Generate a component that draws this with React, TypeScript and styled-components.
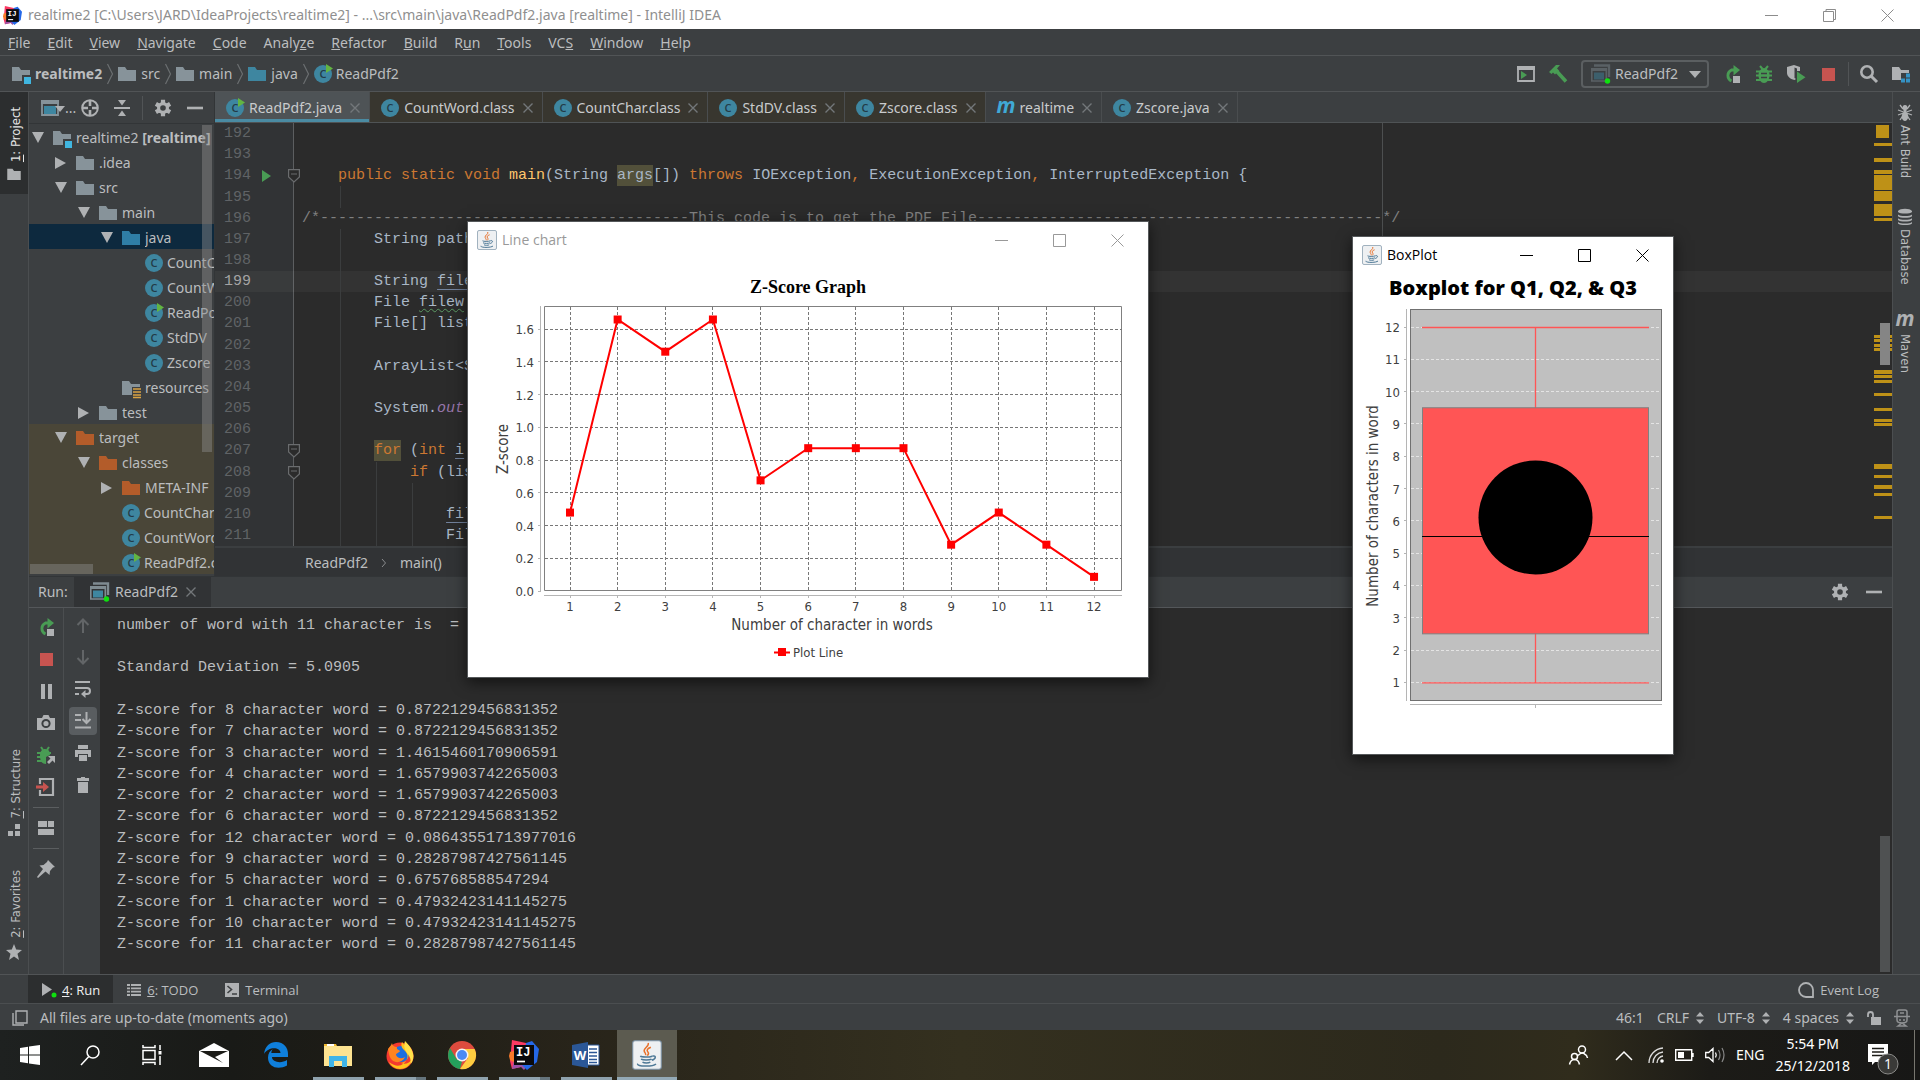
import React from "react";
import styled, { createGlobalStyle, css } from "styled-components";

const ui = `"Noto Sans", "Open Sans", sans-serif`;
const uiNarrow = `"Open Sans", "Noto Sans", sans-serif`;
const tahoma = `"DejaVu Sans Condensed", "DejaVu Sans", sans-serif`;
const mono = `"Liberation Mono", monospace`;

const c = {
  panel: "#3c3f41",
  editor: "#2b2b2b",
  gutter: "#313335",
  dark: "#2c2e2f",
  line: "#515456",
  text: "#bbbdbf",
  icon: "#afb1b3",
  green: "#499c54",
  red: "#c75450",
  teal: "#3e86a0",
  warn: "#be9117",
};

const GlobalStyle = createGlobalStyle`
  * { box-sizing: border-box; }
  body { margin: 0; background: ${c.panel}; overflow: hidden; }
  button, select { font: inherit; color: inherit; background: none; border: 0; padding: 0; margin: 0; }
  h2, p { margin: 0; font-weight: inherit; }
`;

const Desktop = styled.div`
  position: relative;
  display: flex;
  flex-direction: column;
  height: 100vh;
  background: ${c.panel};
  color: ${c.text};
  font: 14px/20px ${ui};
`;

/* ---------- icons ---------- */

const Glyph = styled.svg`
  display: block;
  flex: none;
  overflow: visible;
`;

type IconProps = { w?: number; h?: number; box?: string; children?: React.ReactNode };
const Icon = ({ w = 18, h = 18, box, children }: IconProps) => (
  <Glyph width={w} height={h} viewBox={box ?? `0 0 ${w} ${h}`} fill="none" aria-hidden="true">
    {children}
  </Glyph>
);

const Folder = ({ color = "#87939a", mark }: { color?: string; mark?: "module" | "res" }) => (
  <Icon w={19}>
    <path d="M0 2h7l2 3h9v11H0z" fill={color} />
    {mark === "module" && <path d="M10 10h9v9h-9z" fill={c.panel} />}
    {mark === "module" && <path d="M12 12h7v7h-7z" fill="#40b6e0" />}
    {mark === "res" && <path d="M10 8h9v10h-9z" fill={c.panel} />}
    {mark === "res" && <path d="M11 10h8M11 13h8M11 16h8M11 18.500h8" stroke="#d9a343" strokeWidth="1.500" />}
  </Icon>
);

const ClassIcon = ({ run }: { run?: boolean }) => (
  <Icon>
    <circle cx="9" cy="9" r="9" fill={c.teal} />
    <text x="9" y="13" textAnchor="middle" fontFamily="Open Sans" fontSize="11" fontWeight="600" fill="#233b47">C</text>
    {run && <path d="M12-1l7 4.500-7 4.500z" fill="#62b543" />}
  </Icon>
);

const MavenIcon = ({ color = "#40a9d6" }: { color?: string }) => (
  <Icon w={18}>
    <text x="9" y="14" textAnchor="middle" fontFamily="Open Sans" fontSize="21" fontStyle="italic" fontWeight="700" fill={color}>m</text>
  </Icon>
);

const IdeaIcon = ({ size }: { size: number }) => (
  <Icon w={size} h={size} box="0 0 30 30">
    <path d="M3 0l14 3 3 6-8 18-9 2-2-8z" fill="#fb3a63" />
    <path d="M1 12l7-2v14l-7-4-1-4z" fill="#f97a2b" />
    <path d="M3 29l2-8 14 4-4 5-3-3z" fill="#9a52a8" />
    <path d="M17 3l6-2 7 8-2 13-10 8-5-5z" fill="#2468e8" />
    <path d="M5 5h20v20H5z" fill="#0a0a0c" />
    <text x="7" y="16" fontFamily="Liberation Mono" fontWeight="700" fontSize="12" fill="#fff">IJ</text>
    <path d="M8 21.500h8" stroke="#fff" strokeWidth="1.700" />
  </Icon>
);

const JavaIcon = ({ w = 20, h = 20 }: { w?: number; h?: number }) => (
  <Icon w={w} h={h} box="0 0 20 20">
    <rect x=".5" y=".5" width="19" height="19" rx="1.500" fill="#eef0f2" stroke="#7d93a6" strokeWidth=".7" />
    <path d="M10.800 2c1 2.200-3.600 3.400-2.600 5.600.4 1 1.200 1.500.9 2.600M12.600 4.800c-2.200.8-3.200 1.900-2 3.200.7.800.5 1.600-.4 2.400" stroke="#e8722c" strokeWidth="1" />
    <path d="M5.500 10.800c1 .8 6 .8 8 0M6 12.800c1.500.8 5.500.8 7 0M7 14.800c1.200.7 4 .7 5.200 0M13.600 10.700c2.800-.6 2.400 2-.4 2.800M3.800 15.800c-1 2 10 2.200 12.200.2" stroke="#4d7896" strokeWidth="1" />
  </Icon>
);

const Gear = () => (
  <Icon>
    <path d="M9 .8v16.400M1.900 4.900l14.200 8.200M1.900 13.100l14.200-8.200" stroke={c.icon} strokeWidth="4.200" />
    <circle cx="9" cy="9" r="6" fill={c.icon} />
    <circle cx="9" cy="9" r="2.800" fill={c.panel} />
  </Icon>
);

const Minus = () => <Icon w={16}><path d="M0 9h16" stroke={c.icon} strokeWidth="2.600" /></Icon>;
const CloseMark = () => <Icon w={10} h={10}><path d="M.5.5l9 9M9.500.5l-9 9" stroke="#73777a" strokeWidth="1.400" /></Icon>;

const Rerun = () => (
  <Icon>
    <path d="M12 5H8.500a6 6 0 0 0 0 11" stroke={c.green} strokeWidth="2.800" />
    <path d="M10.500 0L17 5l-6.500 5.500z" fill={c.green} />
    <path d="M10 11h7v7h-7z" fill={c.icon} />
  </Icon>
);
const Stop = () => <Icon w={13} h={13}><path d="M0 0h13v13H0z" fill={c.red} /></Icon>;
const Bug = () => (
  <Icon>
    <path d="M5 1l2.500 3M13 1l-2.500 3M1 6.500h16M1 10.500h16M1 15h16" stroke={c.green} strokeWidth="2" />
    <ellipse cx="9" cy="10.500" rx="5.500" ry="7.500" fill={c.green} />
    <path d="M6 8.500h6M6 12.500h6" stroke={c.panel} strokeWidth="1.500" />
  </Icon>
);
const RunConfig = ({ dim }: { dim?: boolean }) => (
  <Icon w={20} h={20}>
    <g opacity={dim ? 0.45 : 1}>
      <path d="M3 1.500h15V13" stroke="#7f8b91" strokeWidth="2.400" />
      <path d="M.8 5h14.500v12H.8z" stroke="#7f8b91" strokeWidth="1.600" />
      <path d="M0 4h16v3H0z" fill="#7f8b91" />
      <path d="M3 8.500h10v7H3z" fill={c.teal} />
    </g>
    <circle cx="16.500" cy="17" r="2.700" fill="#0fe00f" />
  </Icon>
);

/* ---------- window chrome ---------- */

const TitleBar = styled.header`
  display: flex;
  align-items: center;
  flex: 0 0 29px;
  gap: 6px;
  padding: 1px 4px 0 3px;
  background: #fff;
  color: #8f8f8f;
`;
const Grow = styled.span`flex: 1;`;
const ControlGroup = styled.div`display: flex;`;
const WinButton = styled.button`
  display: flex;
  justify-content: center;
  align-items: center;
  width: 58px;
  height: 28px;
`;
const WinControls = ({ color, restore }: { color: string; restore?: boolean }) => (
  <ControlGroup>
    <WinButton aria-label="Minimize"><Icon w={13} h={13}><path d="M0 6.500h13" stroke={color} /></Icon></WinButton>
    <WinButton aria-label="Maximize">
      <Icon w={13} h={13}>
        {restore ? <path d="M.5 2.500h10v10H.5zM3 2.500v-2h9.500v10H11" stroke={color} /> : <path d="M.5.5h12v12H.5z" stroke={color} />}
      </Icon>
    </WinButton>
    <WinButton aria-label="Close"><Icon w={13} h={13}><path d="M.5.5l12 12M12.500.5l-12 12" stroke={color} /></Icon></WinButton>
  </ControlGroup>
);

const MenuBar = styled.nav`
  display: flex;
  align-items: center;
  flex: 0 0 27px;
  gap: 17px;
  padding: 2px 8px 0;
  border-bottom: 1px solid ${c.line};
`;
const menus: [string, string, string][] = [
  ["", "F", "ile"], ["", "E", "dit"], ["", "V", "iew"], ["", "N", "avigate"], ["", "C", "ode"], ["Analy", "z", "e"],
  ["", "R", "efactor"], ["", "B", "uild"], ["R", "u", "n"], ["", "T", "ools"], ["VC", "S", ""], ["", "W", "indow"], ["", "H", "elp"],
];

const NavBar = styled.div`
  display: flex;
  align-items: center;
  justify-content: space-between;
  flex: 0 0 36px;
  padding: 1px 10px 0 12px;
  border-bottom: 1px solid ${c.line};
`;
const Crumbs = styled.div`
  display: flex;
  align-items: center;
  gap: 5px;
`;
const Crumb = styled.button<{ $bold?: boolean }>`
  display: flex;
  align-items: center;
  gap: 4px;
  font-weight: ${(p) => (p.$bold ? 700 : 400)};
`;
const Chevron = () => <Icon w={6} h={20}><path d="M.5 0l5 10-5 10" stroke="#6b6e70" strokeWidth="1.200" /></Icon>;
const Tools = styled.div`
  display: flex;
  align-items: center;
  gap: 14px;
`;
const ToolButton = styled.button`
  display: flex;
  align-items: center;
  justify-content: center;
  min-width: 18px;
`;
const Divider = styled.span<{ $tight?: boolean }>`
  width: 1px;
  height: 24px;
  margin: 0 ${(p) => (p.$tight ? -3 : 0)}px;
  background: ${c.line};
`;
const RunPicker = styled.label`
  display: flex;
  align-items: center;
  gap: 4px;
  width: 128px;
  height: 28px;
  padding: 0 6px 0 8px;
  border: 2px solid #5b5f61;
  border-radius: 4px;
  select { appearance: none; flex: 1; min-width: 0; outline: none; }
`;

/* ---------- workspace ---------- */

const Workspace = styled.main`
  display: flex;
  flex: 1;
  min-height: 0;
`;
const Stripe = styled.aside<{ $side: "left" | "right" }>`
  display: flex;
  flex-direction: column;
  flex: 0 0 ${(p) => (p.$side === "left" ? 29 : 28)}px;
  ${(p) => (p.$side === "left" ? "border-right" : "border-left")}: 1px solid #4b4e50;
  font: 13px/16px ${tahoma};
`;
const StripeButton = styled.button<{ $active?: boolean; $left?: boolean; $end?: number }>`
  display: flex;
  flex-direction: column;
  align-items: center;
  gap: ${(p) => (p.$left ? 6 : 4)}px;
  padding: ${(p) => (p.$left ? "15px 0" : "13px 3px")} ${(p) => p.$end ?? 12}px 0;
  ${(p) => p.$active && css`background: ${c.dark}; color: #e6e6e6;`}
  span {
    writing-mode: vertical-rl;
    ${(p) => (p.$left ? "transform: rotate(180deg); margin-left: 4px;" : "margin-right: 2px;")}
  }
`;
const Center = styled.div`
  display: flex;
  flex-direction: column;
  flex: 1;
  min-width: 0;
`;
const Upper = styled.div`
  display: flex;
  flex: 1;
  min-height: 0;
`;

const Project = styled.section`
  position: relative;
  display: flex;
  flex-direction: column;
  flex: 0 0 186px;
  border-right: 1px solid #323537;
  overflow: hidden;
`;
const ProjectHead = styled.div`
  display: flex;
  align-items: center;
  gap: 14px;
  flex: 0 0 32px;
  padding-left: 12px;
  border-bottom: 1px solid #323537;
`;
const ViewPicker = styled.button`
  display: flex;
  align-items: center;
  width: 26px;
`;
const Row = styled.button<{ $level: number; $selected?: boolean; $excluded?: boolean }>`
  display: flex;
  align-items: center;
  gap: 4px;
  flex: 0 0 25px;
  width: 100%;
  padding: 2px 0 0 ${(p) => 2 + p.$level * 23}px;
  background: ${(p) => (p.$selected ? "#0d293e" : p.$excluded ? "#4a4638" : "transparent")};
`;
const RowLabel = styled.span`
  flex: 1;
  min-width: 0;
  overflow: hidden;
  text-align: left;
  white-space: nowrap;
`;
const Arrow = styled.span`
  display: flex;
  justify-content: center;
  flex: 0 0 13px;
  margin-right: 5px;
`;
const Thumb = styled.i<{ $w: number; $h: number; $at: string; $color?: string }>`
  position: absolute;
  width: ${(p) => p.$w}px;
  height: ${(p) => p.$h}px;
  ${(p) => p.$at};
  background: ${(p) => p.$color ?? "rgba(140, 140, 140, 0.45)"};
`;

type Node = { label: React.ReactNode; level: number; open?: boolean; closed?: boolean; icon: React.ReactNode; selected?: boolean; excluded?: boolean };
const orange = "#b35c2a";
const tree: Node[] = [
  { label: <>realtime2 <b>[realtime]</b></>, level: 0, open: true, icon: <Folder mark="module" /> },
  { label: ".idea", level: 1, closed: true, icon: <Folder /> },
  { label: "src", level: 1, open: true, icon: <Folder /> },
  { label: "main", level: 2, open: true, icon: <Folder /> },
  { label: "java", level: 3, open: true, icon: <Folder color="#2f7ea6" />, selected: true },
  { label: "CountChar", level: 4, icon: <ClassIcon /> },
  { label: "CountWord", level: 4, icon: <ClassIcon /> },
  { label: "ReadPdf2", level: 4, icon: <ClassIcon run /> },
  { label: "StdDV", level: 4, icon: <ClassIcon /> },
  { label: "Zscore", level: 4, icon: <ClassIcon /> },
  { label: "resources", level: 3, icon: <Folder mark="res" /> },
  { label: "test", level: 2, closed: true, icon: <Folder /> },
  { label: "target", level: 1, open: true, icon: <Folder color={orange} />, excluded: true },
  { label: "classes", level: 2, open: true, icon: <Folder color={orange} />, excluded: true },
  { label: "META-INF", level: 3, closed: true, icon: <Folder color={orange} />, excluded: true },
  { label: "CountChar", level: 3, icon: <ClassIcon />, excluded: true },
  { label: "CountWord", level: 3, icon: <ClassIcon />, excluded: true },
  { label: "ReadPdf2.class", level: 3, icon: <ClassIcon run />, excluded: true },
];

/* ---------- editor ---------- */

const Editor = styled.section`
  display: flex;
  flex-direction: column;
  flex: 1;
  min-width: 0;
`;
const Tabs = styled.div`
  display: flex;
  flex: 0 0 31px;
  border-bottom: 1px solid #4f5355;
`;
const Tab = styled.div<{ $kind: "active" | "lib" | "plain" }>`
  display: flex;
  align-items: center;
  gap: 5px;
  padding: 2px 9px 0 11px;
  color: #c9cbcd;
  border-right: 1px solid #4a4d4f;
  background: ${(p) => (p.$kind === "active" ? "#4e5356" : p.$kind === "lib" ? "#38362f" : c.panel)};
  ${(p) => p.$kind === "active" && "box-shadow: inset 0 -3px #4a8ba3;"}
`;
const TabClose = styled.button`margin-left: 3px;`;

const CodePane = styled.div`
  position: relative;
  display: flex;
  flex-direction: column;
  flex: 1;
  min-height: 0;
  overflow: hidden;
  background: linear-gradient(90deg, ${c.gutter} 78px, #5c5e60 78px, #5c5e60 79px, ${c.editor} 79px);
  font: 15px/20px ${mono};
  color: #a9b7c6;
`;
const CodeRow = styled.div<{ $current?: boolean }>`
  display: flex;
  align-items: center;
  flex: 1;
  min-height: 0;
  white-space: pre;
  ${(p) => p.$current && "background: rgba(255, 255, 255, 0.04);"}
`;
const Gutter = styled.div<{ $current?: boolean }>`
  position: relative;
  display: flex;
  align-items: center;
  align-self: stretch;
  gap: 11px;
  flex: 0 0 79px;
  padding: 1px 0 0 9px;
  color: ${(p) => (p.$current ? "#a4a3a3" : "#606366")};
`;
const Fold = styled.span`
  position: absolute;
  right: -6px;
  top: 4px;
`;
const Code = styled.div`
  position: relative;
  display: flex;
  align-items: center;
  align-self: stretch;
  flex: 1;
  padding: 1px 0 0 8px;
`;
const Guide = styled.i<{ $col: number }>`
  position: absolute;
  top: 0;
  bottom: 0;
  left: ${(p) => 10 + p.$col * 9}px;
  width: 1px;
  background: #3b3d3e;
`;
const K = styled.span`color: #cc7832;`;
const Fn = styled.span`color: #ffc66d;`;
const Field = styled.span`color: #9876aa; font-style: italic;`;
const Comment = styled.span`color: #808080;`;
const Hit = styled.span`background: #52503a; padding: 2px 0;`;
const Var = styled.span<{ $wavy?: boolean }>`
  text-decoration: underline ${(p) => (p.$wavy ? "wavy #5b9a63" : "#72829c")} 1px;
  text-underline-offset: ${(p) => (p.$wavy ? 2 : 4)}px;
`;
const Margin = styled.i`
  position: absolute;
  top: 0;
  bottom: 0;
  left: 1167px;
  width: 1px;
  background: #4d4f50;
`;
const MarkLane = styled.div`
  position: absolute;
  top: 0;
  bottom: 0;
  right: 0;
  width: 18px;
`;
const Mark = styled.i<{ $y: number; $h: number }>`
  position: absolute;
  top: ${(p) => p.$y}px;
  left: 0;
  right: 0;
  height: ${(p) => p.$h}px;
  background: ${c.warn};
`;
const Health = styled.i`
  position: absolute;
  top: 2px;
  left: 2px;
  width: 13px;
  height: 13px;
  background: ${c.warn};
`;
const marks: [number, number][] = [
  [20, 3], [35, 4], [47, 4], [52, 15], [68, 10], [81, 12], [95, 3], [212, 3], [216, 3], [221, 3], [225, 3], [247, 4],
  [252, 3], [257, 3], [270, 3], [285, 3], [296, 3], [300, 3], [341, 5], [352, 3], [362, 4], [370, 3], [393, 3],
];

type Line = { code?: React.ReactNode; guides?: number[]; run?: boolean; fold?: boolean; current?: boolean };
const lines: Line[] = [
  {},
  {},
  {
    run: true,
    fold: true,
    code: <>{"    "}<K>public static void </K><Fn>main</Fn>(String <Hit>args</Hit>[]) <K>throws </K>IOException<K>, </K>ExecutionException<K>, </K>InterruptedException {"{"}</>,
  },
  { guides: [4] },
  { code: <Comment>{"/*" + "-".repeat(41) + "This code is to get the PDF File" + "-".repeat(45) + "*/"}</Comment> },
  { guides: [4], code: <>{"        "}String path</> },
  { guides: [4] },
  { guides: [4], current: true, code: <>{"        "}String <Var>file</Var></> },
  { guides: [4], code: <>{"        "}File <Var $wavy>filew</Var></> },
  { guides: [4], code: <>{"        "}File[] list</> },
  { guides: [4] },
  { guides: [4], code: <>{"        "}ArrayList&lt;S</> },
  { guides: [4] },
  { guides: [4], code: <>{"        "}System.<Field>out</Field>.</> },
  { guides: [4] },
  { guides: [4], fold: true, code: <>{"        "}<Hit><K>for</K></Hit> (<K>int</K> <Var>i</Var></> },
  { guides: [4, 8], fold: true, code: <>{"            "}<K>if</K> (lis</> },
  { guides: [4, 8, 12] },
  { guides: [4, 8, 12], code: <>{"                "}<Var>fil</Var></> },
  { guides: [4, 8, 12], code: <>{"                "}Fil</> },
];

const Breadcrumbs = styled.div`
  display: flex;
  align-items: center;
  gap: 14px;
  flex: 0 0 30px;
  padding: 1px 0 0 90px;
  background: ${c.gutter};
  border-top: 2px solid #3b3e40;
`;

/* ---------- run tool window ---------- */

const RunPanel = styled.section`
  display: flex;
  flex-direction: column;
  flex: 0 0 398px;
  border-top: 1px solid #323537;
`;
const RunHead = styled.div`
  display: flex;
  align-items: center;
  flex: 0 0 31px;
  gap: 16px;
  padding: 0 9px;
  border-bottom: 1px solid #54575a;
`;
const RunTitle = styled.span`width: 20px;`;
const RunTab = styled.div`
  display: flex;
  align-items: center;
  align-self: stretch;
  gap: 5px;
  padding: 0 15px 0 16px;
  background: ${c.gutter};
`;
const RunBody = styled.div`
  display: flex;
  flex: 1;
  min-height: 0;
`;
const ToolColumn = styled.div<{ $last?: boolean }>`
  display: flex;
  flex-direction: column;
  align-items: center;
  flex: 0 0 ${(p) => (p.$last ? 36 : 35)}px;
  padding-top: ${(p) => (p.$last ? 1 : 3)}px;
  padding-left: ${(p) => (p.$last ? 2 : 0)}px;
  border-right: ${(p) => (p.$last ? 0 : 1)}px solid #4b4e50;
`;
const ColumnButton = styled.button<{ $on?: boolean }>`
  display: flex;
  align-items: center;
  justify-content: center;
  width: 28px;
  height: 28px;
  margin: 2px 0;
  border-radius: 4px;
  background: ${(p) => (p.$on ? "#595d60" : "none")};
`;
const Rule = styled.span`
  width: 26px;
  height: 1px;
  margin: 4px 0;
  background: #5b5e60;
`;
const Console = styled.div`
  position: relative;
  display: flex;
  flex-direction: column;
  flex: 1;
  padding: 7px 17px 18px;
  background: ${c.editor};
  font: 15px/20px ${mono};
`;
const ConsoleLine = styled.p`
  display: flex;
  align-items: center;
  flex: 1;
  min-height: 0;
  white-space: pre;
`;
const output = [
  "number of word with 11 character is  =",
  "",
  "Standard Deviation = 5.0905",
  "",
  "Z-score for 8 character word = 0.8722129456831352",
  "Z-score for 7 character word = 0.8722129456831352",
  "Z-score for 3 character word = 1.4615460170906591",
  "Z-score for 4 character word = 1.6579903742265003",
  "Z-score for 2 character word = 1.6579903742265003",
  "Z-score for 6 character word = 0.8722129456831352",
  "Z-score for 12 character word = 0.08643551713977016",
  "Z-score for 9 character word = 0.28287987427561145",
  "Z-score for 5 character word = 0.675768588547294",
  "Z-score for 1 character word = 0.47932423141145275",
  "Z-score for 10 character word = 0.47932423141145275",
  "Z-score for 11 character word = 0.28287987427561145",
];

/* ---------- bottom bars ---------- */

const BottomStripe = styled.div`
  display: flex;
  align-items: stretch;
  flex: 0 0 29px;
  padding: 0 28px;
  border-top: 1px solid ${c.line};
  font: 13px/20px ${uiNarrow};
`;
const StripeTab = styled.button<{ $active?: boolean }>`
  display: flex;
  align-items: center;
  gap: 6px;
  padding: 1px 13px 0 14px;
  ${(p) => p.$active && css`background: ${c.dark}; color: #f0f0f0;`}
`;
const StatusBar = styled.footer`
  display: flex;
  align-items: center;
  gap: 12px;
  flex: 0 0 27px;
  padding: 1px 10px 0 12px;
  border-top: 1px solid #4b4e50;
`;
const StatusItem = styled.button`
  display: flex;
  align-items: center;
  gap: 7px;
  margin-left: 1px;
`;
const UpDown = () => <Icon w={8} h={12}><path d="M0 4.500L4 0l4 4.500zM0 7.500L4 12l4-4.500z" fill={c.icon} /></Icon>;

const TaskBar = styled.nav`
  display: flex;
  flex: 0 0 50px;
  color: #fff;
  background: linear-gradient(90deg, #1e2120 0, #191a17 12%, #1d1c16 18%, #28241a 30%, #34301f 50%, #2c291c 75%, #302c1c 82%, #1c1b17 89%, #171716 100%);
`;
const Task = styled.button<{ $state?: "open" | "grouped" | "active"; $w?: number }>`
  display: flex;
  align-items: center;
  justify-content: center;
  width: ${(p) => p.$w ?? 62}px;
  background: ${(p) =>
    p.$state === "active"
      ? "linear-gradient(#93a9b6, #93a9b6) bottom / 100% 3px no-repeat, #5c5b50"
      : p.$state === "grouped"
        ? "linear-gradient(90deg, #8fa2ad 41px, #65747c 41px) bottom / 51px 3px no-repeat"
        : p.$state === "open"
          ? "linear-gradient(#8fa2ad, #8fa2ad) bottom / 51px 3px no-repeat"
          : "none"};
`;
const Tray = styled.div`
  display: flex;
  align-items: center;
  gap: 11px;
  margin-left: auto;
  padding-right: 5px;
`;
const Clock = styled.button`
  font: 14px/22px ${ui};
  text-align: center;
`;
const ShowDesktop = styled.i`
  width: 1px;
  height: 50px;
  margin-left: 6px;
  background: #77766f;
`;

/* ---------- floating chart windows ---------- */

const Frame = styled.section<{ $x: number; $y: number; $w: number; $h: number }>`
  position: absolute;
  left: ${(p) => p.$x}px;
  top: ${(p) => p.$y}px;
  width: ${(p) => p.$w}px;
  height: ${(p) => p.$h}px;
  display: flex;
  flex-direction: column;
  background: #fff;
  border: 1px solid #55585a;
  box-shadow: 0 4px 14px rgba(0, 0, 0, 0.6);
`;
const FrameBar = styled.header<{ $active?: boolean }>`
  display: flex;
  align-items: center;
  gap: 5px;
  flex: 0 0 36px;
  padding: 0 2px 0 9px;
  color: ${(p) => (p.$active ? "#000" : "#999")};
  font: 14px/20px ${uiNarrow};
`;
const ChartTitle = styled.h2<{ $serif?: boolean }>`
  color: #000;
  text-align: center;
  font: ${(p) => (p.$serif ? `700 18px/18px "Liberation Serif", serif` : `800 20px/28px ${uiNarrow}`)};
  padding-top: ${(p) => (p.$serif ? 20 : 1)}px;
`;
const Chart = styled.svg`
  display: block;
  font-family: ${tahoma};
  font-size: 13px;
  fill: #404040;
  .label { font-size: 15px; }
`;

const scores = [0.479, 1.658, 1.4615, 1.658, 0.6757, 0.8722, 0.8722, 0.8722, 0.2829, 0.479, 0.2829, 0.0864];

const LineChart = () => {
  const x = (i: number) => 102 + i * 47.64;
  const y = (v: number) => 295 - v * 163.75;
  return (
    <Chart width="680" height="380" viewBox="0 0 680 380" role="img" aria-label="Z-Score Graph">
      <path d="M76.500 10.500h577v284h-577z" fill="none" stroke="#808080" />
      <path d="M72.500 10v286M76 299.500h578" stroke="#b5b5b5" />
      {scores.map((_, i) => (
        <g key={i}>
          <path d={`M${Math.floor(x(i)) + 0.5} 11v284`} stroke="#777" strokeDasharray="3 2" />
          <path d={`M${Math.floor(x(i)) + 0.5} 300v2`} stroke="#b5b5b5" />
          <text x={x(i)} y="315" textAnchor="middle">{i + 1}</text>
        </g>
      ))}
      {scores.slice(0, 9).map((_, i) => (
        <g key={i}>
          {i > 0 && <path d={`M77 ${Math.floor(y(i / 5)) + 0.5}h577`} stroke="#777" strokeDasharray="3 2" />}
          <path d={`M70 ${Math.floor(y(i / 5)) + 0.5}h3`} stroke="#b5b5b5" />
          <text x="66" y={y(i / 5) + 5} textAnchor="end">{(i / 5).toFixed(1)}</text>
        </g>
      ))}
      <polyline points={scores.map((v, i) => `${x(i)},${y(v)}`).join(" ")} fill="none" stroke="#f00" strokeWidth="2" />
      {scores.map((v, i) => <rect key={i} x={x(i) - 4} y={y(v) - 4} width="8" height="8" fill="#f00" />)}
      <text className="label" x="364" y="334" textAnchor="middle">Number of character in words</text>
      <text className="label" transform="translate(40 153) rotate(-90)" textAnchor="middle">Z-score</text>
      <path d="M306 356.500h16" stroke="#f00" strokeWidth="2" />
      <rect x="310" y="352" width="8" height="8" fill="#f00" />
      <text x="325" y="361">Plot Line</text>
    </Chart>
  );
};

const BoxChart = () => {
  const y = (v: number) => 25 + (12 - v) * 32.3;
  const values = Array.from({ length: 12 }, (_, i) => i + 1);
  return (
    <Chart width="320" height="420" viewBox="0 0 320 420" role="img" aria-label="Boxplot for Q1, Q2, & Q3">
      <rect x="57.500" y="7.500" width="251" height="391" fill="#c0c0c0" stroke="#707070" />
      <path d="M53.500 7v392M57 402.500h252M182.500 403v3" stroke="#b5b5b5" />
      {values.map((v) => (
        <g key={v}>
          <path d={`M58 ${Math.floor(y(v)) + 0.5}h250`} stroke="#e4e4e4" strokeDasharray="3 2" />
          <path d={`M51 ${Math.floor(y(v)) + 0.5}h3`} stroke="#b5b5b5" />
          <text x="47" y={y(v) + 5} textAnchor="end">{v}</text>
        </g>
      ))}
      <path d={`M69 ${y(12) + 0.5}h227M69 ${y(1) + 0.5}h227M182.500 ${y(12)}V${y(1)}`} stroke="#f55" strokeWidth="1.300" />
      <rect x="69.500" y={y(9.5)} width="226" height={y(2.5) - y(9.5)} fill="#f55" stroke="#808080" />
      <path d={`M69 ${Math.floor(y(5.5)) + 0.5}h227`} stroke="#000" />
      <circle cx="182.500" cy="215.500" r="57" fill="#000" />
      <text className="label" transform="translate(25 204) rotate(-90)" textAnchor="middle">Number of characters in word</text>
    </Chart>
  );
};

/* ---------- page ---------- */

const tabs: { name: string; kind: "active" | "lib" | "plain"; icon: React.ReactNode }[] = [
  { name: "ReadPdf2.java", kind: "active", icon: <ClassIcon run /> },
  { name: "CountWord.class", kind: "lib", icon: <ClassIcon /> },
  { name: "CountChar.class", kind: "lib", icon: <ClassIcon /> },
  { name: "StdDV.class", kind: "lib", icon: <ClassIcon /> },
  { name: "Zscore.class", kind: "lib", icon: <ClassIcon /> },
  { name: "realtime", kind: "plain", icon: <MavenIcon /> },
  { name: "Zscore.java", kind: "plain", icon: <ClassIcon /> },
];

const Ide = () => (
  <>
    <TitleBar>
      <IdeaIcon size={19} />
      <span>realtime2 [C:\Users\JARD\IdeaProjects\realtime2] - ...\src\main\java\ReadPdf2.java [realtime] - IntelliJ IDEA</span>
      <Grow />
      <WinControls color="#8c8c8c" restore />
    </TitleBar>
    <MenuBar>
      {menus.map(([a, key, b]) => <button key={a + key + b}>{a}<u>{key}</u>{b}</button>)}
    </MenuBar>
    <NavBar>
      <Crumbs>
        <Crumb $bold><Folder mark="module" />realtime2</Crumb><Chevron />
        <Crumb><Folder />src</Crumb><Chevron />
        <Crumb><Folder />main</Crumb><Chevron />
        <Crumb><Folder color={c.teal} />java</Crumb><Chevron />
        <Crumb><ClassIcon run />ReadPdf2</Crumb>
      </Crumbs>
      <Tools>
        <ToolButton aria-label="Open console">
          <Icon><path d="M1 2h16v14H1z" stroke={c.icon} strokeWidth="1.800" /><path d="M0 1h18v4H0z" fill={c.icon} /><path d="M4 6l6 4-6 4z" fill={c.green} /></Icon>
        </ToolButton>
        <ToolButton aria-label="Build">
          <Icon><path d="M7 5.500l10 11" stroke={c.green} strokeWidth="3.600" /><path d="M0 7l7-7h4L8 3.500l2 2-4 4-2-2-1.500 1.500z" fill={c.green} /></Icon>
        </ToolButton>
        <RunPicker>
          <RunConfig dim />
          <select aria-label="Run configuration"><option>ReadPdf2</option></select>
          <Icon w={12} h={7}><path d="M0 0h12L6 7z" fill={c.icon} /></Icon>
        </RunPicker>
        <ToolButton aria-label="Rerun"><Rerun /></ToolButton>
        <ToolButton aria-label="Debug"><Bug /></ToolButton>
        <ToolButton aria-label="Coverage">
          <Icon><path d="M0 2l7-2 6 2v4h-3V3.500L7.500 2.500v10.500L9 14l-1.500 1C3 14 0 11 0 8z" fill={c.icon} /><path d="M10 6.500l8.500 5.800L10 18z" fill={c.green} /></Icon>
        </ToolButton>
        <ToolButton aria-label="Stop"><Stop /></ToolButton>
        <Divider $tight />
        <ToolButton aria-label="Search"><Icon><circle cx="7" cy="7" r="5.700" stroke={c.icon} strokeWidth="2.600" /><path d="M11 11l6 6" stroke={c.icon} strokeWidth="3" /></Icon></ToolButton>
        <ToolButton aria-label="Project structure">
          <Icon><path d="M0 2h7l2 3h8v3H9v7H0z" fill={c.icon} /><path d="M14 8.500h4v4h-4zM9 13.500h4v4H9zM14 13.500h4v4h-4z" fill="#3592c4" /></Icon>
        </ToolButton>
      </Tools>
    </NavBar>

    <Workspace>
      <Stripe $side="left">
        <StripeSlot left active end={14}>
          <span><u>1</u>: Project</span>
          <Icon w={14} h={12} box="0 0 18 16"><path d="M0 1h7l2 3h9v12H0z" fill={c.icon} /></Icon>
        </StripeSlot>
        <Grow />
        <StripeSlot left end={18}>
          <span><u>7</u>: Structure</span>
          <Icon w={13} h={13}><path d="M7 0h5v5H7zM0 7h5v5H0zM7 7h5v5H7z" fill={c.icon} /></Icon>
        </StripeSlot>
        <StripeSlot left end={14}>
          <span><u>2</u>: Favorites</span>
          <Icon w={16} h={16}><path d="M8 0l2.200 5.600 5.800.4-4.500 3.800L13 16l-5-3.400L3 16l1.500-6.200L0 6l5.800-.4z" fill={c.icon} /></Icon>
        </StripeSlot>
      </Stripe>

      <Center>
        <Upper>
          <Project>
            <ProjectHead>
              <ViewPicker aria-label="Project view">
                <Icon w={24}><path d="M1 2h16v14H1z" stroke="#87939a" strokeWidth="1.800" /><path d="M0 1h18v4H0z" fill="#87939a" /><path d="M3 7h12v8H3z" fill={c.teal} /><path d="M14 7h10l-5 6z" fill={c.icon} /></Icon>
                <span>...</span>
              </ViewPicker>
              <ToolButton aria-label="Locate">
                <Icon><circle cx="9" cy="9" r="7.800" stroke={c.icon} strokeWidth="2" /><path d="M9 1v6M9 11v6M1 9h6M11 9h6" stroke={c.icon} strokeWidth="2.600" /></Icon>
              </ToolButton>
              <ToolButton aria-label="Collapse all">
                <Icon w={16}><path d="M0 9h16" stroke={c.icon} strokeWidth="2" /><path d="M4 1h8L8 6.500zM4 17h8l-4-5.500z" fill={c.icon} /></Icon>
              </ToolButton>
              <Divider $tight />
              <ToolButton aria-label="Settings"><Gear /></ToolButton>
              <ToolButton aria-label="Hide"><Minus /></ToolButton>
            </ProjectHead>
            {tree.map((n, i) => (
              <Row key={i} $level={n.level} $selected={n.selected} $excluded={n.excluded}>
                <Arrow>
                  {n.open && <Icon w={12} h={11}><path d="M0 0h12L6 11z" fill="#afb1b3" /></Icon>}
                  {n.closed && <Icon w={11} h={12}><path d="M0 0v12l11-6z" fill="#afb1b3" /></Icon>}
                </Arrow>
                {n.icon}
                <RowLabel>{n.label}</RowLabel>
              </Row>
            ))}
            <Thumb $w={10} $h={327} $at="right: 2px; top: 33px" />
            <Thumb $w={63} $h={10} $at="left: 1px; bottom: 2px" />
          </Project>

          <Editor>
            <Tabs>
              {tabs.map((t) => (
                <Tab key={t.name} $kind={t.kind}>
                  {t.icon}
                  <span>{t.name}</span>
                  <TabClose aria-label={`Close ${t.name}`}><CloseMark /></TabClose>
                </Tab>
              ))}
            </Tabs>
            <CodePane>
              <Margin />
              {lines.map((l, i) => (
                <CodeRow key={i} $current={l.current}>
                  <Gutter $current={l.current}>
                    <span>{192 + i}</span>
                    {l.run && <Icon w={9} h={12}><path d="M0 0v12l9-6z" fill={c.green} /></Icon>}
                    {l.fold && <Fold><Icon w={12} h={14}><path d="M.6.600h10.800v7.400l-5.400 5-5.400-5zM3 5h6" fill={c.editor} stroke="#6a6c6e" strokeWidth="1.200" /></Icon></Fold>}
                  </Gutter>
                  <Code>
                    {l.guides?.map((g) => <Guide key={g} $col={g} />)}
                    <span>{l.code}</span>
                  </Code>
                </CodeRow>
              ))}
              <MarkLane>
                <Health />
                {marks.map(([y, h]) => <Mark key={y} $y={y} $h={h} />)}
                <Thumb $w={10} $h={42} $at="right: 2px; top: 200px" $color="#858585" />
              </MarkLane>
            </CodePane>
            <Breadcrumbs><span>ReadPdf2</span><Icon w={4} h={8}><path d="M0 0l3.500 4L0 8" stroke="#8a8c8e" /></Icon><span>main()</span></Breadcrumbs>
          </Editor>
        </Upper>

        <RunPanel>
          <RunHead>
            <RunTitle>Run:</RunTitle>
            <RunTab><RunConfig /><span>ReadPdf2</span><TabClose aria-label="Close run tab"><CloseMark /></TabClose></RunTab>
            <Grow />
            <ToolButton aria-label="Run settings"><Gear /></ToolButton>
            <ToolButton aria-label="Hide run window"><Minus /></ToolButton>
          </RunHead>
          <RunBody>
            <ToolColumn>
              <ColumnButton aria-label="Rerun"><Rerun /></ColumnButton>
              <ColumnButton aria-label="Stop"><Stop /></ColumnButton>
              <ColumnButton aria-label="Pause"><Icon w={11} h={15}><path d="M0 0h4v15H0zM7 0h4v15H7z" fill={c.icon} /></Icon></ColumnButton>
              <ColumnButton aria-label="Thread dump">
                <Icon><path d="M0 4h5l1.500-3h5L13 4h5v12H0z" fill={c.icon} /><circle cx="9" cy="9.500" r="3.600" stroke={c.panel} strokeWidth="2" /></Icon>
              </ColumnButton>
              <ColumnButton aria-label="Attach debugger">
                <Icon><path d="M4 1l2 3M12 1l-2 3M0 7h14M0 11h8M0 15h7" stroke={c.green} strokeWidth="2" /><path d="M8 3c4 0 5 3 5 6l-4 2v7c-4 0-6-3-6-8s2-7 5-7z" fill={c.green} /><path d="M11 10h7v7l-2.500-2.500L12 18l-2-2 3.500-3.500z" fill={c.icon} /></Icon>
              </ColumnButton>
              <ColumnButton aria-label="Exit">
                <Icon><path d="M3 6V1h13v16H3v-5" stroke={c.icon} strokeWidth="2.200" /><path d="M-1 7.500h7V4l6 5-6 5v-3.500h-7z" fill={c.red} /></Icon>
              </ColumnButton>
              <Rule />
              <ColumnButton aria-label="Layout"><Icon w={16} h={14}><path d="M0 0h9v6H0zM10 0h6v6h-6zM0 8h16v6H0z" fill={c.icon} /></Icon></ColumnButton>
              <Rule />
              <ColumnButton aria-label="Pin"><Icon><path d="M11 0l7 7-2 .5-3 3.500-.5 4-4-3.500L1 18l-1-1 6-8-3.500-3.500 4-.5L10 2z" fill={c.icon} /></Icon></ColumnButton>
            </ToolColumn>
            <ToolColumn $last>
              <ColumnButton aria-label="Up"><Icon w={14} h={15}><path d="M7 15V1M1.500 7L7 1.500 12.500 7" stroke="#626567" strokeWidth="2" /></Icon></ColumnButton>
              <ColumnButton aria-label="Down"><Icon w={14} h={15}><path d="M7 0v14M1.500 8L7 13.500 12.500 8" stroke="#626567" strokeWidth="2" /></Icon></ColumnButton>
              <ColumnButton aria-label="Soft wrap">
                <Icon><path d="M1 2h15M1 8h12a3 3 0 0 1 0 6h-3M1 14h4" stroke={c.icon} strokeWidth="2" /><path d="M11.500 10v8L7 14z" fill={c.icon} /></Icon>
              </ColumnButton>
              <ColumnButton $on aria-label="Scroll to end">
                <Icon><path d="M1 3h6M1 8h6M1 15.500h16M12.500 0v11M8.500 7l4 4 4-4" stroke={c.icon} strokeWidth="2" /></Icon>
              </ColumnButton>
              <ColumnButton aria-label="Print"><Icon w={16} h={16}><path d="M3 0h10v4H3zM0 5h16v7h-3V9H3v3H0zM4 10h8v6H4z" fill={c.icon} /></Icon></ColumnButton>
              <ColumnButton aria-label="Clear"><Icon w={12} h={16}><path d="M4 0h4v1h4v3H0V1h4zM1 5h10v11H1z" fill={c.icon} /></Icon></ColumnButton>
            </ToolColumn>
            <Console>
              {output.map((t, i) => <ConsoleLine key={i}>{t}</ConsoleLine>)}
              <Thumb $w={10} $h={136} $at="right: 2px; bottom: 2px" $color="#4f5152" />
            </Console>
          </RunBody>
        </RunPanel>
      </Center>

      <Stripe $side="right">
        <StripeSlot end={18}>
          <Icon w={14} h={16}><path d="M2 0l3 4M12 0L9 4M0 5l14 5M14 5L0 10M2 15l4-6M12 15L8 9" stroke={c.icon} strokeWidth="1.300" /><path d="M7 0a2.500 2.500 0 0 1 2 4L8 7c4 3 2 9-1 9s-5-6-1-9L5 4a2.500 2.500 0 0 1 2-4z" fill={c.icon} /></Icon>
          <span>Ant Build</span>
        </StripeSlot>
        <StripeSlot end={14}>
          <Icon w={14} h={16}><path d="M0 2c2-3 12-3 14 0v1c-2 2-12 2-14 0zM0 5.500c2 2 12 2 14 0v1.800c-2 2-12 2-14 0zM0 9.200c2 2 12 2 14 0V11c-2 2-12 2-14 0zM0 13c2 2 12 2 14 0v1.500c-2 2-12 2-14 0z" fill={c.icon} /></Icon>
          <span>Database</span>
        </StripeSlot>
        <StripeSlot end={12}><MavenIcon color={c.icon} /><span>Maven</span></StripeSlot>
      </Stripe>
    </Workspace>

    <BottomStripe>
      <StripeTab $active>
        <Icon w={14} h={16}><path d="M0 1v13l10-6.500z" fill={c.icon} /><circle cx="12" cy="13" r="2.500" fill="#0fe00f" /></Icon>
        <span><u>4</u>: Run</span>
      </StripeTab>
      <StripeTab>
        <Icon w={14} h={12}><path d="M0 1h3M4 1h10M0 4.300h3M4 4.300h10M0 7.600h3M4 7.600h10M0 11h3M4 11h10" stroke={c.icon} strokeWidth="1.800" /></Icon>
        <span><u>6</u>: TODO</span>
      </StripeTab>
      <StripeTab>
        <Icon w={14} h={14}><path d="M0 0h14v14H0z" fill={c.icon} /><path d="M2.500 3l4 3.500-4 3.500M7 11h5" stroke={c.panel} strokeWidth="1.600" /></Icon>
        Terminal
      </StripeTab>
      <Grow />
      <StripeTab>
        <Icon w={16} h={16}><path d="M15 15H8a7 7 0 1 1 7-7z" stroke={c.icon} strokeWidth="1.800" /></Icon>
        Event Log
      </StripeTab>
    </BottomStripe>

    <StatusBar>
      <Icon w={16} h={16}><path d="M4 1h11v12H4zM1 3v12h11" stroke={c.icon} strokeWidth="1.400" /></Icon>
      <span>All files are up-to-date (moments ago)</span>
      <Grow />
      <StatusItem>46:1</StatusItem>
      <StatusItem>CRLF <UpDown /></StatusItem>
      <StatusItem>UTF-8 <UpDown /></StatusItem>
      <StatusItem>4 spaces <UpDown /></StatusItem>
      <StatusItem aria-label="Writable"><Icon w={14} h={14}><path d="M4 6h10v8H4z" fill={c.icon} /><path d="M1 6V3.500a2.500 2.500 0 0 1 5 0V7" stroke={c.icon} strokeWidth="1.800" /></Icon></StatusItem>
      <StatusItem aria-label="Inspections">
        <Icon w={16} h={18}><path d="M3 7V3q0-2 2-2h6q2 0 2 2v4M0 7.500h16M3 8v3q0 3 5 3t5-3V8M5 11h2M9 11h2M4 17l4-3 4 3zM6 4h4" stroke="#8f9193" strokeWidth="1.500" /></Icon>
      </StatusItem>
    </StatusBar>
  </>
);

type SlotProps = { left?: boolean; active?: boolean; end: number; children: React.ReactNode };
const SlotButton = styled.button<{ $left?: boolean; $active?: boolean; $end: number }>`
  display: flex;
  flex-direction: column;
  align-items: center;
  gap: ${(p) => (p.$left ? 6 : 4)}px;
  padding: ${(p) => (p.$left ? 15 : 13)}px ${(p) => (p.$left ? 0 : 3)}px ${(p) => p.$end}px 0;
  ${(p) => p.$active && css`background: ${c.dark}; color: #e6e6e6;`}
  span {
    writing-mode: vertical-rl;
    ${(p) => (p.$left ? "transform: rotate(180deg); margin-left: 4px;" : "margin-right: 1px;")}
  }
`;
function StripeSlot({ left, active, end, children }: SlotProps) {
  return <SlotButton $left={left} $active={active} $end={end}>{children}</SlotButton>;
}

const Taskbar = () => (
  <TaskBar>
    <Task $w={59} aria-label="Start"><Icon w={20} h={20}><path d="M0 3l8-1.200v7.700H0zM9 1.600L20 0v9.500H9zM0 10.500h8v7.700L0 17zM9 10.500h11V20L9 18.400z" fill="#fff" /></Icon></Task>
    <Task aria-label="Search"><Icon w={20} h={20}><circle cx="13" cy="7" r="6" stroke="#fff" strokeWidth="1.500" /><path d="M8.800 11.500L1 20" stroke="#fff" strokeWidth="1.500" /></Icon></Task>
    <Task aria-label="Task view"><Icon w={20} h={20}><path d="M1 5.500h12v9H1zM1 0v2.500h12V0M1 20v-2.500h12V20M18 0v5M18 11v9" stroke="#fff" strokeWidth="1.500" /><path d="M16.500 6h3v3.500h-3z" fill="#fff" /></Icon></Task>
    <Task aria-label="Mail"><Icon w={30} h={24}><path d="M0 8L15 0l15 8v16H0z" fill="#fff" /><path d="M1 8h28L16 14l8 6z" fill="#1b1b17" /></Icon></Task>
    <Task aria-label="Edge"><Icon w={26} h={26}><path d="M1 12C2 4 7 0 13 0c8 0 12 6 12 12v3H9c0 5 9 7 15 3v5.500c-8 4.500-19 2.500-19-8 0-4 2-7 5-8.500-1 1-1.500 2-1.700 4h9.200c0-6-12-7-16.500 1z" fill="#0f7fdb" /></Icon></Task>
    <Task $state="open" aria-label="File Explorer">
      <Icon w={28} h={24}><path d="M0 1h12l1 2H0z" fill="#f0b92f" /><path d="M0 3h28v20H0z" fill="#fde391" /><path d="M3 1h7v2H3z" fill="#fff" /><path d="M5 24V13h18v11h-5v-6h-8v6z" fill="#3fb4e8" /></Icon>
    </Task>
    <Task $state="grouped" aria-label="Firefox">
      <Icon w={28} h={28}>
        <circle cx="14" cy="15" r="13.500" fill="#f5392f" />
        <circle cx="15" cy="13" r="8" fill="#1b6fe0" />
        <path d="M16 1c2 3 5 4 6 8 2 7-1 12-7 13 4 2 9 0 11-4-1 6-6 10-12 10-5 0-9-3-11-7 9 7 15 3 18-3 2-5-2-8-4-10-2-2-2-5-1-7z" fill="#ffc21c" />
        <path d="M19 0c3 3 8 8 8.500 15 0 4-2 7-3 8 1-6-2-9-4-12-2-3-3-6-1.500-11z" fill="#ffe14a" />
        <path d="M2 8c2-3 3-3 4-6 0 2 2 4 5 4-1 2 2 3 3 4-1 2-4 2-4 4 2 4 6 4 9 2-2 5-9 7-13 3-3-3-3-7-4-11z" fill="#ff8420" />
      </Icon>
    </Task>
    <Task $state="open" aria-label="Chrome">
      <Icon w={28} h={28}><circle cx="14" cy="14" r="14" fill="#dd4b3e" /><path d="M2 7l6.500 11L14 20.500 12 28A14 14 0 0 1 2 7z" fill="#24a15c" /><path d="M14 8h12.600A14 14 0 0 1 12 28l8-11z" fill="#fecd40" /><circle cx="14" cy="14" r="6.500" fill="#f4f4f4" /><circle cx="14" cy="14" r="5" fill="#4a8af4" /></Icon>
    </Task>
    <Task $state="grouped" aria-label="IntelliJ IDEA"><IdeaIcon size={30} /></Task>
    <Task $state="open" aria-label="Word">
      <Icon w={28} h={26}><path d="M15 3h12v20H15z" fill="#fff" stroke="#2b5797" /><path d="M17 7h8M17 10.500h8M17 14h8M17 17.500h8M17 20.500h8" stroke="#2b5797" strokeWidth="1.500" /><path d="M0 3l16-3v26L0 23z" fill="#2b5797" /><text x="8" y="18" textAnchor="middle" fontFamily="Open Sans" fontWeight="700" fontSize="13" fill="#fff">W</text></Icon>
    </Task>
    <Task $state="active" $w={60} aria-label="Java"><JavaIcon w={30} h={30} /></Task>
    <Tray>
      <Icon w={19} h={20}><circle cx="13" cy="4.500" r="3.500" stroke="#fff" strokeWidth="1.500" /><circle cx="5.500" cy="11.500" r="3" stroke="#fff" strokeWidth="1.500" /><path d="M.5 19.500q1-5 5-5t5 5M9 10.500q4-4 6.500-1.500 2.500 1 3 4" stroke="#fff" strokeWidth="1.500" /></Icon>
      <Icon w={38} h={18}><path d="M17 14l8-8 8 8" stroke="#fff" strokeWidth="1.500" /></Icon>
      <Icon w={16} h={16}><path d="M1 16A15 15 0 0 1 15 1M5 16A11 11 0 0 1 15 5M9 16a7 7 0 0 1 6-7" stroke="#ddd" strokeWidth="1.300" /><circle cx="14" cy="14" r="1.800" fill="#fff" /></Icon>
      <Icon w={19} h={12}><path d="M.7.700h16v10.600H.7zM18 4v4" stroke="#fff" strokeWidth="1.400" /><path d="M3 3h6v6H3z" fill="#fff" /></Icon>
      <Icon w={20} h={16}><path d="M.7 5.500h3L8 1.500v13l-4.300-4h-3zM10.500 5.500q1.500 2.500 0 5" stroke="#fff" strokeWidth="1.300" /><path d="M13.500 3q3 5 0 10M17 1q4 7 0 14" stroke="#888" strokeWidth="1.200" /></Icon>
      <span>ENG</span>
      <Clock>5:54 PM<br />25/12/2018</Clock>
      <Icon w={36} h={30}><path d="M7 4h20v18H14l-3 3v-3H7z" fill="#fff" /><path d="M11 8.500h12M11 12h12M11 15.500h12" stroke="#1c1b17" strokeWidth="1.300" /><circle cx="27" cy="24" r="10" fill="#3a3a38" stroke="#8a8a88" /><text x="27" y="29" textAnchor="middle" fontFamily="Open Sans" fontSize="14" fill="#fff">1</text></Icon>
      <ShowDesktop />
    </Tray>
  </TaskBar>
);

export default function App() {
  return (
    <Desktop>
      <GlobalStyle />
      <Ide />
      <Taskbar />
      <Frame $x={467} $y={221} $w={682} $h={457}>
        <FrameBar><JavaIcon /><span>Line chart</span><Grow /><WinControls color="#999" /></FrameBar>
        <ChartTitle $serif>Z-Score Graph</ChartTitle>
        <LineChart />
      </Frame>
      <Frame $x={1352} $y={236} $w={322} $h={519}>
        <FrameBar $active><JavaIcon /><span>BoxPlot</span><Grow /><WinControls color="#000" /></FrameBar>
        <ChartTitle>Boxplot for Q1, Q2, &amp; Q3</ChartTitle>
        <BoxChart />
      </Frame>
    </Desktop>
  );
}
